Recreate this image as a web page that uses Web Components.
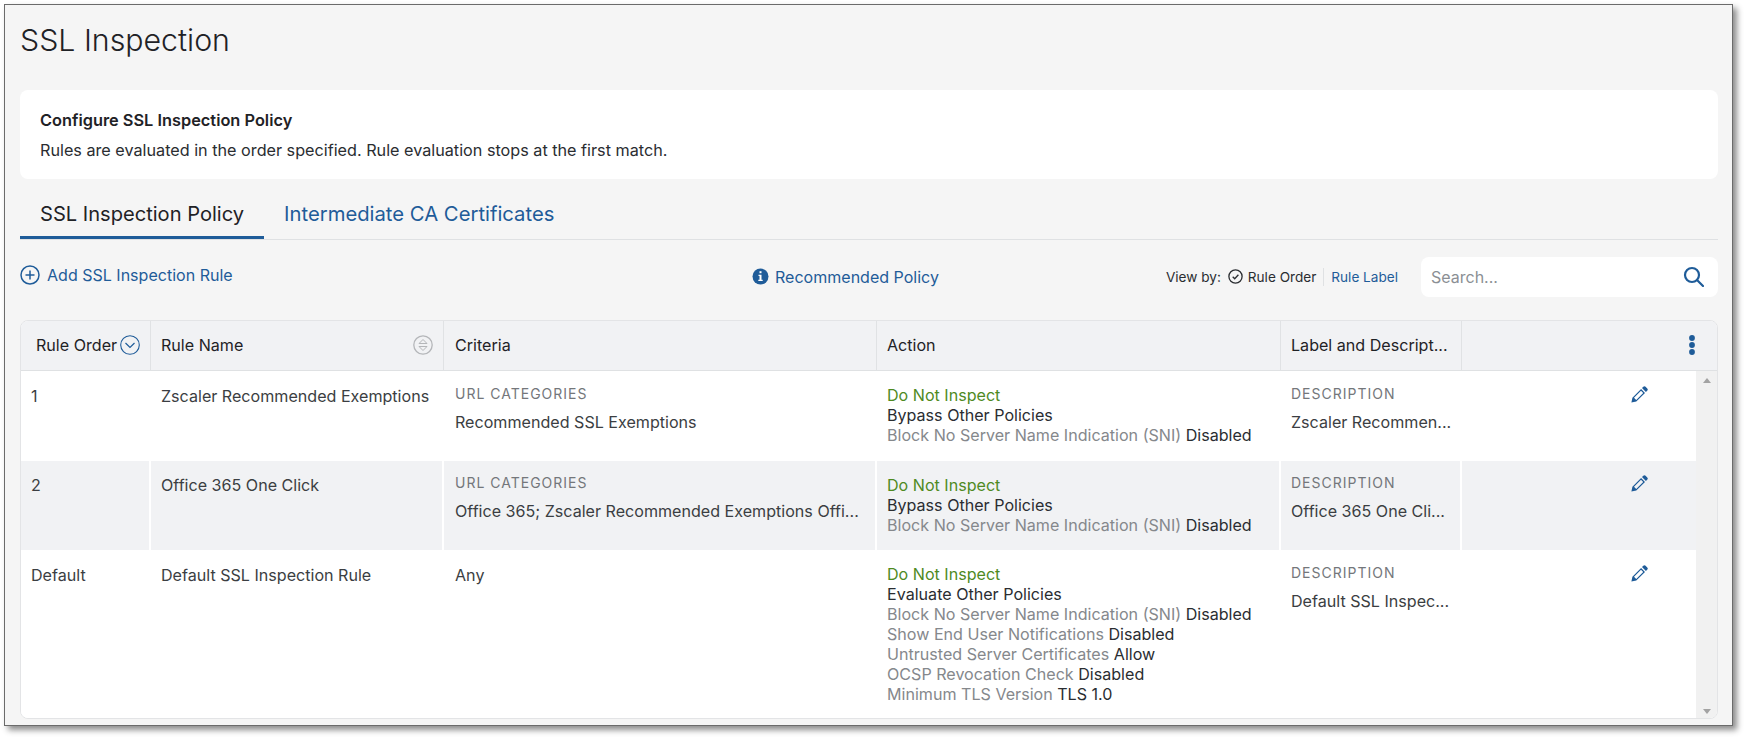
<!DOCTYPE html>
<html>
<head>
<meta charset="utf-8">
<title>SSL Inspection</title>
<style>
html, body { margin: 0; background: #fff; }
body { font-family: Inter, "Liberation Sans", sans-serif; width: 1745px; height: 739px; overflow: hidden; }
</style>
</head>
<body>
<ssl-window>
    <page-title>SSL Inspection</page-title>
    <info-card heading="Configure SSL Inspection Policy">Rules are evaluated in the order specified. Rule evaluation stops at the first match.</info-card>
    <tab-bar></tab-bar>
    <tool-bar></tool-bar>
    <rule-table>
        <rule-row>
            <span slot="order">1</span>
            <span slot="name">Zscaler Recommended Exemptions</span>
            <field-block slot="criteria" label="URL CATEGORIES">Recommended SSL Exemptions</field-block>
            <action-list slot="action" verdict="Do Not Inspect" policy="Bypass Other Policies" items="Block No Server Name Indication (SNI)|Disabled"></action-list>
            <field-block slot="label" label="DESCRIPTION">Zscaler Recommen...</field-block>
        </rule-row>
        <rule-row shaded>
            <span slot="order">2</span>
            <span slot="name">Office 365 One Click</span>
            <field-block slot="criteria" label="URL CATEGORIES">Office 365; Zscaler Recommended Exemptions Offi...</field-block>
            <action-list slot="action" verdict="Do Not Inspect" policy="Bypass Other Policies" items="Block No Server Name Indication (SNI)|Disabled"></action-list>
            <field-block slot="label" label="DESCRIPTION">Office 365 One Cli...</field-block>
        </rule-row>
        <rule-row tall>
            <span slot="order">Default</span>
            <span slot="name">Default SSL Inspection Rule</span>
            <span slot="criteria">Any</span>
            <action-list slot="action" verdict="Do Not Inspect" policy="Evaluate Other Policies" items="Block No Server Name Indication (SNI)|Disabled;Show End User Notifications|Disabled;Untrusted Server Certificates|Allow;OCSP Revocation Check|Disabled;Minimum TLS Version|TLS 1.0"></action-list>
            <field-block slot="label" label="DESCRIPTION">Default SSL Inspec...</field-block>
        </rule-row>
    </rule-table>
</ssl-window>

<script>
// every element gets its own shadow root, this helper keeps the classes short
class ShadowEl extends HTMLElement {
    constructor() {
        super();
        this._shadowRoot = this.attachShadow({mode: "open"});
    }
    connectedCallback() {
        this._shadowRoot.innerHTML = this.render();
    }
}

const BLUE = "#1f5c99";

class SslWindow extends ShadowEl {
    render() {
        return `
            <style>
            :host {
                display: block;
                box-sizing: border-box;
                width: 1729px;
                height: 722px;
                margin: 4px 0 0 4px;
                padding: 0 14px 6px 15px;
                background: #f5f5f5;
                border: 1px solid #6b6b6b;
                box-shadow: 4px 4px 6px rgba(0,0,0,.45);
            }
            </style>
            <slot></slot>
        `;
    }
}

class PageTitle extends ShadowEl {
    render() {
        return `
            <style>
            :host {
                display: block;
                height: 85px;
                padding-top: 13px;
                box-sizing: border-box;
                font-size: 30.3px;
                line-height: 44px;
                font-weight: 300;
                color: #1f2226;
            }
            </style>
            <slot></slot>
        `;
    }
}

class InfoCard extends ShadowEl {
    render() {
        return `
            <style>
            :host {
                display: block;
                box-sizing: border-box;
                height: 89px;
                background: #fff;
                border-radius: 8px;
                padding: 20px 20px 0;
                font-size: 16.2px;
                color: #2a2d31;
            }
            h2 { margin: 0; font-size: 16.35px; line-height: 20px; font-weight: 600; color: #1f2226; }
            p { margin: 10px 0 0; line-height: 20px; }
            </style>
            <h2>${this.getAttribute("heading")}</h2>
            <p><slot></slot></p>
        `;
    }
}

class TabBar extends ShadowEl {
    render() {
        return `
            <style>
            :host {
                display: flex;
                height: 61px;
                box-sizing: border-box;
                border-bottom: 1px solid #dfe1e3;
                font-size: 20.1px;
            }
            div { padding: 23px 20px 0; height: 37px; line-height: 24px; }
            .on { color: #1f2226; border-bottom: 3px solid ${BLUE}; height: 34px; padding-bottom: 0; margin-bottom: -1px; }
            .off { color: ${BLUE}; font-size: 20.25px; }
            </style>
            <div class="on">SSL Inspection Policy</div>
            <div class="off">Intermediate CA Certificates</div>
        `;
    }
}

class ToolBar extends ShadowEl {
    render() {
        return `
            <style>
            :host {
                display: grid;
                grid-template-columns: 732px 317px 1fr;
                align-items: center;
                height: 80px;
                box-sizing: border-box;
                padding-bottom: 7px;
                font-size: 16.05px;
                color: ${BLUE};
            }
            .link { display: flex; align-items: center; gap: 6px; }
            .add { margin-top: -4px; }
            .add svg { margin-right: 1px; }
            .right { display: flex; align-items: center; justify-content: flex-end; font-size: 13.6px; }
            .view { color: #2a2d31; margin-right: 7px; }
            .check { margin-right: 5px; }
            .order { color: #2a2d31; padding-right: 7px; border-right: 1px solid #dfe1e3; line-height: 18px; margin-right: 7px; }
            .search {
                display: flex;
                align-items: center;
                justify-content: space-between;
                box-sizing: border-box;
                width: 297px;
                height: 40px;
                margin-left: 23px;
                padding: 0 14px 0 10px;
                background: #fff;
                border-radius: 8px;
                color: #8b8f94;
                font-size: 16px;
            }
            </style>
            <div class="link add">
                <svg width="20" height="20" viewBox="0 0 20 20" fill="none" stroke="${BLUE}" stroke-width="1.5"><circle cx="10" cy="10" r="9"/><path d="M10 5.5v9M5.5 10h9"/></svg>
                Add SSL Inspection Rule
            </div>
            <div class="link">
                <svg width="17" height="17" viewBox="0 0 17 17"><circle cx="8.5" cy="8.5" r="8" fill="${BLUE}"/><rect x="7.5" y="3.2" width="2" height="2" fill="#fff"/><path d="M6.5 6.8h3v5h1.2v1.2H6.3v-1.2h1.2V8H6.5z" fill="#fff"/></svg>
                Recommended Policy
            </div>
            <div class="right">
                <span class="view">View by:</span>
                <svg class="check" width="15" height="15" viewBox="0 0 15 15" fill="none" stroke="#2a2d31" stroke-width="1.3"><circle cx="7.5" cy="7.5" r="6.6"/><path d="M4.7 7.7l2 2 3.7-4"/></svg>
                <span class="order">Rule Order</span>
                <span>Rule Label</span>
                <div class="search">
                    <span>Search...</span>
                    <svg width="21" height="21" viewBox="0 0 21 21" fill="none" stroke="${BLUE}" stroke-width="2.2"><circle cx="9" cy="9" r="7"/><path d="M14 14l6 6" stroke-linecap="round"/></svg>
                </div>
            </div>
        `;
    }
}

class RuleTable extends ShadowEl {
    render() {
        return `
            <style>
            :host {
                display: block;
                position: relative;
                box-sizing: border-box;
                width: 1698px;
                height: 399px;
                background: #fff;
                border: 1px solid #e3e4e6;
                border-radius: 8px;
                overflow: hidden;
                font-size: 16.1px;
                color: #3b3e42;
            }
            .head {
                display: grid;
                grid-template-columns: 130px 293px 433px 404px 181px 1fr;
                height: 49px;
                background: #f1f2f4;
                border-bottom: 1px solid #dfe1e3;
                color: #1f2226;
            }
            .head div {
                display: flex;
                align-items: center;
                justify-content: space-between;
                box-sizing: border-box;
                padding: 0 10px 1px;
                border-right: 1px solid #e0e2e4;
                white-space: nowrap;
            }
            .head div:first-child { padding: 0 10px 1px 15px; gap: 2px; }
            .head div:nth-child(3) { padding-left: 11px; }
            .head div:last-child { border-right: 0; justify-content: flex-end; padding-right: 22px; }
            .body { display: grid; grid-template-columns: 1fr 21px; }
            .track {
                display: flex;
                flex-direction: column;
                justify-content: space-between;
                align-items: center;
                height: 348px;
                padding: 7px 0 5px;
                box-sizing: border-box;
                background: #f1f1f1;
            }
            .up { border: 4px solid transparent; border-top: 0; border-bottom: 5px solid #a3a3a3; }
            .dn { border: 4px solid transparent; border-bottom: 0; border-top: 5px solid #a3a3a3; }
            </style>
            <div class="head">
                <div>Rule Order
                    <svg width="20" height="20" viewBox="0 0 20 20" fill="none" stroke="${BLUE}" stroke-width="1.1"><circle cx="10" cy="10" r="9.3"/><path d="M5.5 8l4.5 4.5L14.500 8" stroke-width="1.2"/></svg>
                </div>
                <div>Rule Name
                    <svg width="20" height="20" viewBox="0 0 20 20" fill="none" stroke="#b4b6b9" stroke-width="1.3"><circle cx="10" cy="10" r="9.2"/><path d="M6 8.500l4-4 4 4zM6 11.500l4 4 4-4z" stroke-width="1"/></svg>
                </div>
                <div>Criteria</div>
                <div>Action</div>
                <div>Label and Descript...</div>
                <div>
                    <svg width="6" height="20" viewBox="0 0 6 20" fill="${BLUE}"><circle cx="3" cy="3" r="2.900"/><circle cx="3" cy="10" r="2.900"/><circle cx="3" cy="17" r="2.900"/></svg>
                </div>
            </div>
            <div class="body">
                <div><slot></slot></div>
                <div class="track"><span class="up"></span><span class="dn"></span></div>
            </div>
        `;
    }
}

class RuleRow extends ShadowEl {
    render() {
        const height = this.hasAttribute("tall") ? 170 : (this.hasAttribute("shaded") ? 89 : 90);
        const bg = this.hasAttribute("shaded") ? "#f1f2f4" : "#fff";
        return `
            <style>
            :host {
                display: grid;
                grid-template-columns: 130px 293px 433px 404px 181px 1fr;
                height: ${height}px;
                background: ${bg};
            }
            .cell { box-sizing: border-box; padding: 15px 10px 0; line-height: 20px; border-right: 2px solid #fff; }
            .cell:first-child { padding-left: 9px; }
            .crit { padding-left: 11px; }
            :host(:not([shaded])) .cell { border-right-color: transparent; }
            :host([shaded]) .cell { padding-top: 14px; }
            :host([shaded]) .cell.act { padding-top: 15px; }
            .edit { border-right: 0; padding: 15px 0 0 169px; }
            </style>
            <div class="cell"><slot name="order"></slot></div>
            <div class="cell"><slot name="name"></slot></div>
            <div class="cell crit"><slot name="criteria"></slot></div>
            <div class="cell act"><slot name="action"></slot></div>
            <div class="cell"><slot name="label"></slot></div>
            <div class="cell edit">
                <svg width="17" height="17" viewBox="0 0 17 17" fill="${BLUE}"><path d="M12.300.8a1.600 1.600 0 0 1 2.300 0l1.600 1.600a1.600 1.600 0 0 1 0 2.300l-1.300 1.300-3.900-3.900zM10.100 3l3.900 3.900-8.700 8.700L.4 16.600l1-4.900zM3 11.800l2.200 2.200 7-7-2.200-2.200z" fill-rule="evenodd"/></svg>
            </div>
        `;
    }
}

class FieldBlock extends ShadowEl {
    render() {
        return `
            <style>
            :host { display: block; white-space: nowrap; }
            .label { font-size: 14px; letter-spacing: 1px; line-height: 16px; color: #74777b; }
            .value { margin-top: 10px; line-height: 20px; }
            </style>
            <div class="label">${this.getAttribute("label")}</div>
            <div class="value"><slot></slot></div>
        `;
    }
}

class ActionList extends ShadowEl {
    render() {
        const items = this.getAttribute("items").split(";").map(i => {
            const [k, v] = i.split("|");
            return `<div><span class="k">${k}</span> ${v}</div>`;
        }).join("");
        return `
            <style>
            :host { display: block; margin-top: -1px; line-height: 20px; color: #2a2d31; white-space: nowrap; }
            .v { color: #4f8a1f; }
            .k { color: #85888c; }
            </style>
            <div class="v">${this.getAttribute("verdict")}</div>
            <div>${this.getAttribute("policy")}</div>
            ${items}
        `;
    }
}

customElements.define("ssl-window", SslWindow);
customElements.define("page-title", PageTitle);
customElements.define("info-card", InfoCard);
customElements.define("tab-bar", TabBar);
customElements.define("tool-bar", ToolBar);
customElements.define("rule-table", RuleTable);
customElements.define("rule-row", RuleRow);
customElements.define("field-block", FieldBlock);
customElements.define("action-list", ActionList);
</script>
</body>
</html>
